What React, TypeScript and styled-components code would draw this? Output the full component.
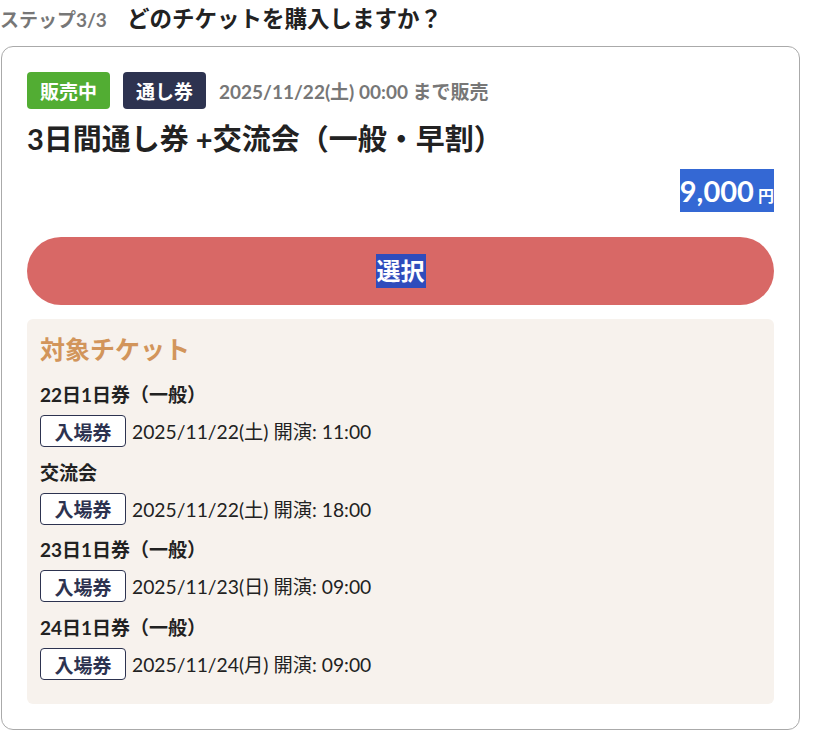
import styled, { createGlobalStyle } from "styled-components";

const GlobalStyle = createGlobalStyle`
  * { box-sizing: border-box; }
  body {
    margin: 0;
    background: #fff;
    font-family: "Lato", "Noto Sans CJK JP", sans-serif;
    color: #222;
  }
`;

const targets = [
  { name: "22日1日券（一般）", date: "2025/11/22(土) 開演: 11:00" },
  { name: "交流会", date: "2025/11/22(土) 開演: 18:00" },
  { name: "23日1日券（一般）", date: "2025/11/23(日) 開演: 09:00" },
  { name: "24日1日券（一般）", date: "2025/11/24(月) 開演: 09:00" },
];

const App = () => {
  return (
    <Page>
      <GlobalStyle />
      <Header>
        <Step>ステップ3/3</Step>
        <Question>どのチケットを購入しますか？</Question>
      </Header>
      <Card>
        <Meta>
          <Badge $bg="#52ad33">販売中</Badge>
          <Badge $bg="#2d3350">通し券</Badge>
          <Deadline>2025/11/22(土) 00:00 まで販売</Deadline>
        </Meta>
        <Title>3日間通し券 +交流会（一般・早割）</Title>
        <PriceRow>
          <Selected>
            <Price>9,000</Price> <Yen>円</Yen>
          </Selected>
        </PriceRow>
        <SelectButton>
          <SelectedDark>選択</SelectedDark>
        </SelectButton>
        <Targets>
          <TargetsTitle>対象チケット</TargetsTitle>
          <TargetList>
            {targets.map((t) => (
              <Item key={t.name + t.date}>
                <ItemName>{t.name}</ItemName>
                <ItemRow>
                  <OutlineBadge>入場券</OutlineBadge>
                  <ItemDate>{t.date}</ItemDate>
                </ItemRow>
              </Item>
            ))}
          </TargetList>
        </Targets>
      </Card>
    </Page>
  );
};

const Page = styled.div`
  width: 814px;
`;

const Header = styled.div`
  display: flex;
  align-items: baseline;
  gap: 20px;
  padding-top: 2px;
  height: 35px;
  margin-bottom: 11px;
`;

const Step = styled.span`
  font-size: 19px;
  font-weight: 700;
  color: #777;
  line-height: 33px;
`;

const Question = styled.span`
  font-size: 22.5px;
  font-weight: 700;
  color: #222;
  line-height: 33px;
`;

const Card = styled.div`
  margin-left: 1px;
  width: 799px;
  border: 1px solid #aaa;
  border-radius: 12px;
  padding: 25px;
`;

const Meta = styled.div`
  display: flex;
  align-items: center;
  gap: 13px;
`;

const Badge = styled.span<{ $bg: string }>`
  display: inline-flex;
  align-items: center;
  justify-content: center;
  height: 37px;
  padding: 0 13px;
  border-radius: 4px;
  background: ${(p) => p.$bg};
  color: #fff;
  font-size: 19px;
  font-weight: 700;
`;

const Deadline = styled.span`
  font-size: 19px;
  font-weight: 700;
  color: #777;
`;

const Title = styled.h2`
  margin: 10px 0 0;
  font-size: 29px;
  font-weight: 700;
  line-height: 40px;
  color: #222;
`;

const PriceRow = styled.div`
  display: flex;
  justify-content: flex-end;
  margin-top: 10px;
  height: 43px;
`;

const Selected = styled.span`
  background: #3468d4;
  color: #fff;
  line-height: 43px;
  height: 43px;
  white-space: pre;
`;

const Price = styled.span`
  font-size: 29px;
  font-weight: 700;
`;

const Yen = styled.span`
  font-size: 16px;
  font-weight: 700;
`;

const SelectButton = styled.button`
  display: flex;
  align-items: center;
  justify-content: center;
  width: 100%;
  height: 68px;
  margin-top: 25px;
  border: none;
  border-radius: 34px;
  background: #d86866;
  color: #fff;
  font-family: inherit;
  font-size: 24px;
  font-weight: 700;
  cursor: pointer;
`;

const SelectedDark = styled.span`
  background: #2f4cbc;
  line-height: 34px;
  padding: 0 1px;
`;

const Targets = styled.div`
  margin-top: 14px;
  background: #f7f2ed;
  border-radius: 6px;
  padding: 11px 13px 24px;
`;

const TargetsTitle = styled.h3`
  margin: 0;
  font-size: 25px;
  font-weight: 700;
  line-height: 38px;
  color: #d2955b;
`;

const TargetList = styled.div`
  display: flex;
  flex-direction: column;
  gap: 11.7px;
  margin-top: 13px;
`;

const Item = styled.div`
  display: flex;
  flex-direction: column;
  gap: 6px;
`;

const ItemName = styled.div`
  font-size: 19px;
  font-weight: 700;
  line-height: 28px;
  color: #222;
`;

const ItemRow = styled.div`
  display: flex;
  align-items: center;
  gap: 6px;
`;

const OutlineBadge = styled.span`
  display: inline-flex;
  align-items: center;
  justify-content: center;
  width: 86px;
  height: 32px;
  border: 1px solid #2d3350;
  border-radius: 4px;
  background: #fff;
  color: #2d3350;
  font-size: 19px;
  font-weight: 700;
`;

const ItemDate = styled.span`
  font-size: 19.3px;
  color: #222;
`;

export default App;
